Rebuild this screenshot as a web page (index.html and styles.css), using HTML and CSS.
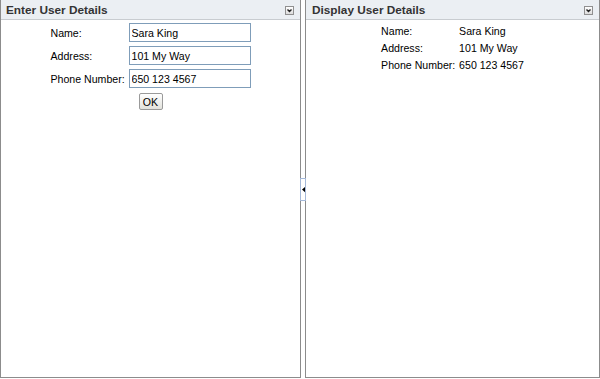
FILE: index.html
```html
<!DOCTYPE html>
<html lang="en">
<head>
    <meta charset="UTF-8">
    <title>User Details</title>
    <link rel="stylesheet" href="styles.css">
</head>
<body>
    <div class="layout">
        <div class="panel panel-left">
            <div class="panel-header">
                <span class="panel-title">Enter User Details</span>
                <span class="collapse-btn">
                    <svg width="9" height="9" viewBox="0 0 9 9"><path d="M2.5 3.5 L4.5 5.5 L6.5 3.5" fill="none" stroke="#222" stroke-width="1.4"/></svg>
                </span>
            </div>
            <form class="panel-body" id="user-form">
                <div class="form-grid">
                    <label for="name">Name:</label>
                    <input type="text" id="name" value="Sara King">
                    <label for="address">Address:</label>
                    <input type="text" id="address" value="101 My Way">
                    <label for="phone">Phone Number:</label>
                    <input type="text" id="phone" value="650 123 4567">
                </div>
                <button type="submit" class="btn-ok">OK</button>
            </form>
        </div>
        <div class="splitter">
            <span class="splitter-handle">
                <svg width="4" height="7" viewBox="0 0 4 7"><path d="M4 0 L0 3.5 L4 7 Z" fill="#000"/></svg>
            </span>
        </div>
        <div class="panel panel-right">
            <div class="panel-header">
                <span class="panel-title">Display User Details</span>
                <span class="collapse-btn">
                    <svg width="9" height="9" viewBox="0 0 9 9"><path d="M2.5 3.5 L4.5 5.5 L6.5 3.5" fill="none" stroke="#222" stroke-width="1.4"/></svg>
                </span>
            </div>
            <div class="panel-body">
                <div class="display-grid">
                    <span>Name:</span><span id="out-name">Sara King</span>
                    <span>Address:</span><span id="out-address">101 My Way</span>
                    <span>Phone Number:</span><span id="out-phone">650 123 4567</span>
                </div>
            </div>
        </div>
    </div>

    <script>
        document.getElementById('user-form').addEventListener('submit', function(e) {
            e.preventDefault();
            document.getElementById('out-name').textContent = document.getElementById('name').value;
            document.getElementById('out-address').textContent = document.getElementById('address').value;
            document.getElementById('out-phone').textContent = document.getElementById('phone').value;
        });
    </script>
</body>
</html>
```

FILE: styles.css
```css
:root {
    --panel-border: #8c8c8c;
    --header-bg: #ebeff3;
    --header-line: #c8ccd0;
    --input-border: #7f9db9;
    --text-color: #000;
}
body {
    margin: 0;
    background-color: #fff;
    font-family: 'Liberation Sans', Arial, sans-serif;
    font-size: 10.6px;
    color: var(--text-color);
}
.layout {
    display: flex;
    height: 378px;
}
.panel {
    display: flex;
    flex-direction: column;
    box-sizing: border-box;
    border: 1px solid var(--panel-border);
    border-top: none;
}
.panel-left {
    width: 301px;
}
.panel-right {
    width: 295px;
}
.panel-right .panel-header {
    padding-left: 6px;
}
.panel-header {
    display: flex;
    align-items: center;
    justify-content: space-between;
    height: 19px;
    padding: 1px 6px 0 5px;
    box-sizing: border-box;
    height: 20px;
    background-color: var(--header-bg);
    border-bottom: 1px solid var(--header-line);
}
.panel-title {
    font-size: 11.8px;
    font-weight: bold;
    color: #333;
}
.collapse-btn {
    display: flex;
    box-sizing: border-box;
    width: 9px;
    height: 9px;
    border: 1px solid #909090;
    background: linear-gradient(#ffffff, #dcdcdc);
}
.collapse-btn svg {
    margin: -1px;
}
.panel-body {
    display: flex;
    flex-direction: column;
    align-items: center;
    margin: 0;
    padding-top: 3px;
}
.form-grid {
    display: grid;
    grid-template-columns: 78px 122px;
    grid-auto-rows: 19px;
    row-gap: 4px;
    align-items: center;
}
.form-grid input {
    box-sizing: border-box;
    width: 122px;
    height: 19px;
    margin: 0;
    padding: 0 2px;
    border: 1px solid var(--input-border);
    font-family: inherit;
    font-size: 10.6px;
    color: var(--text-color);
    outline: none;
}
.btn-ok {
    box-sizing: border-box;
    width: 24px;
    height: 17px;
    margin-top: 5px;
    padding: 0;
    border: 1px solid #9a9a9a;
    border-radius: 2px;
    background: linear-gradient(#ffffff, #e2e2dc);
    font-family: inherit;
    font-size: 10.6px;
    color: var(--text-color);
}
.display-grid {
    display: grid;
    grid-template-columns: 78px auto;
    grid-auto-rows: 17px;
    align-items: center;
    margin-top: -1px;
}
.splitter {
    position: relative;
    width: 4px;
}
.splitter-handle {
    position: absolute;
    top: 178px;
    left: -1px;
    display: flex;
    align-items: center;
    box-sizing: border-box;
    width: 6px;
    height: 23px;
    padding-left: 1px;
    background-color: #fff;
    border: 1px solid #a4b8d8;
}
```
